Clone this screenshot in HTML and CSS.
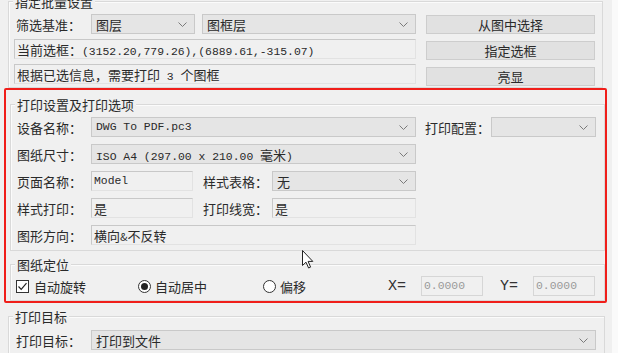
FILE: index.html
```html
<!DOCTYPE html>
<html lang="zh-CN">
<head>
    <meta charset="UTF-8">
    <meta name="viewport" content="width=device-width, initial-scale=1.0">
    <title>批量打印</title>
    <link rel="stylesheet" href="styles.css">
</head>
<body>
    <div class="dialog">
        <div class="group batch">
            <div class="group-title">指定批量设置</div>
            <div class="batch-body">
                <div class="batch-left">
                    <div class="row">
                        <span class="label label-wide">筛选基准：</span>
                        <div class="select w-104">图层<svg class="chev" viewBox="0 0 9 5"><path d="M0.5 0.5 L4.5 4.5 L8.5 0.5"/></svg></div>
                        <div class="select w-214 ml-7">图框层<svg class="chev" viewBox="0 0 9 5"><path d="M0.5 0.5 L4.5 4.5 L8.5 0.5"/></svg></div>
                    </div>
                    <div class="row gap-5">
                        <div class="field w-402"><span>当前选框：<span class="num">(3152.20,779.26),(6889.61,-315.07)</span></span></div>
                    </div>
                    <div class="row gap-5">
                        <div class="field w-402"><span>根据已选信息，需要打印<span class="num">&nbsp;3&nbsp;</span>个图框</span></div>
                    </div>
                </div>
                <div class="batch-right">
                    <button class="btn">从图中选择</button>
                    <button class="btn">指定选框</button>
                    <button class="btn">亮显</button>
                </div>
            </div>
        </div>

        <div class="group print-opts">
            <div class="group-title">打印设置及打印选项</div>
            <div class="row">
                <span class="label">设备名称：</span>
                <div class="select w-325"><span class="num">DWG To PDF.pc3</span><svg class="chev" viewBox="0 0 9 5"><path d="M0.5 0.5 L4.5 4.5 L8.5 0.5"/></svg></div>
                <span class="label label-cfg">打印配置：</span>
                <div class="select w-105"><span></span><svg class="chev" viewBox="0 0 9 5"><path d="M0.5 0.5 L4.5 4.5 L8.5 0.5"/></svg></div>
            </div>
            <div class="row gap-7">
                <span class="label">图纸尺寸：</span>
                <div class="select w-325"><span><span class="num">ISO A4 (297.00 x 210.00 </span>毫米<span class="num">)</span></span><svg class="chev" viewBox="0 0 9 5"><path d="M0.5 0.5 L4.5 4.5 L8.5 0.5"/></svg></div>
            </div>
            <div class="row gap-7">
                <span class="label">页面名称：</span>
                <div class="field w-102"><span class="num">Model</span></div>
                <span class="label label-mid">样式表格：</span>
                <div class="select w-144">无<svg class="chev" viewBox="0 0 9 5"><path d="M0.5 0.5 L4.5 4.5 L8.5 0.5"/></svg></div>
            </div>
            <div class="row gap-7">
                <span class="label">样式打印：</span>
                <div class="field w-102">是</div>
                <span class="label label-mid">打印线宽：</span>
                <div class="field w-144">是</div>
            </div>
            <div class="row gap-7">
                <span class="label">图形方向：</span>
                <div class="field w-325"><span>横向<span class="amp">&amp;</span>不反转</span></div>
            </div>
        </div>

        <div class="group place">
            <div class="group-title">图纸定位</div>
            <div class="row">
                <div class="opt opt-1">
                    <span class="checkbox"><svg viewBox="0 0 11 11"><path d="M1.5 5.5 L4.2 8.3 L9.5 2.2"/></svg></span>自动旋转
                </div>
                <div class="opt opt-2">
                    <span class="radio checked"></span>自动居中
                </div>
                <div class="opt opt-3">
                    <span class="radio"></span>偏移
                </div>
                <span class="coord">X=</span>
                <div class="field w-62 muted"><span class="num">0.0000</span></div>
                <span class="coord ml-17">Y=</span>
                <div class="field w-62 muted"><span class="num">0.0000</span></div>
            </div>
        </div>

        <div class="group target">
            <div class="group-title">打印目标</div>
            <div class="row">
                <span class="label label-target">打印目标：</span>
                <div class="select w-505">打印到文件<svg class="chev" viewBox="0 0 9 5"><path d="M0.5 0.5 L4.5 4.5 L8.5 0.5"/></svg></div>
            </div>
        </div>

        <div class="highlight"></div>

        <svg class="cursor" viewBox="0 0 12 19" width="12" height="19">
            <path d="M0.5 0.5 L0.5 15.5 L4 12.2 L6.6 18 L8.6 17.1 L6.1 11.4 L10.8 11.4 Z"/>
        </svg>
    </div>
</body>
</html>
```

FILE: styles.css
```css
* {
    margin: 0;
    padding: 0;
    box-sizing: border-box;
}

body {
    font-family: "Noto Sans CJK SC", "Noto Sans", sans-serif;
    font-size: 13px;
    color: #2a2a2a;
    background: #fafafa;
}

.dialog {
    position: relative;
    width: 612px;
    height: 353px;
    background: #f0f0f0;
    overflow: hidden;
}

/* group boxes */
.group {
    position: relative;
    border: 1px solid #d9d9d9;
    box-shadow: inset 1px 1px 0 #fbfbfb;
}

.group-title {
    position: absolute;
    top: -9px;
    left: 4px;
    padding: 0 2px;
    line-height: 17px;
    background: #f0f0f0;
}

.batch {
    margin: 1px 0 0 8px;
    width: 595px;
    height: 87px;
    padding: 12px 0 0 5px;
}

.batch-body {
    display: flex;
}

.batch-left {
    width: 402px;
}

.batch-right {
    display: flex;
    flex-direction: column;
    gap: 7px;
    margin-left: 10px;
    padding-top: 1px;
}

.print-opts {
    margin: 16px 0 0 10px;
    width: 595px;
    height: 147px;
    padding: 12px 0 0 6px;
}

.place {
    margin: 13px 0 0 10px;
    width: 595px;
    height: 37px;
    padding: 11px 0 0 5px;
}

.target {
    margin: 15px 0 0 8px;
    width: 597px;
    height: 60px;
    padding: 13px 0 0 7px;
}

/* rows */
.row {
    display: flex;
    align-items: center;
    height: 20px;
}

.gap-5 { margin-top: 5px; }
.gap-7 { margin-top: 7px; }
.ml-7 { margin-left: 7px; }
.ml-17 { margin-left: 17px; }

.label {
    width: 74px;
    white-space: nowrap;
}

.label-wide {
    width: 77px;
    padding-left: 2px;
}

.label-cfg {
    width: 66px;
    margin-left: 9px;
}

.label-mid {
    width: 69px;
    margin-left: 10px;
}

.label-target {
    width: 75px;
}

/* controls */
.select {
    height: 20px;
    display: flex;
    align-items: center;
    justify-content: space-between;
    padding: 0 7px 0 4px;
    border: 1px solid #c9c9c9;
    background: #e5e5e5;
    white-space: nowrap;
}

.chev {
    width: 9px;
    height: 5px;
    fill: none;
    stroke: #7a7a7a;
    stroke-width: 1;
}

.field {
    height: 20px;
    display: flex;
    align-items: center;
    padding-left: 2px;
    border: 1px solid #e2e2e2;
    border-top-color: #c8c8c8;
    border-left-color: #c8c8c8;
    background: #f0f0f0;
    white-space: nowrap;
}

.muted {
    color: #9a9a9a;
    border-color: #d6d6d6;
}

.num {
    font-family: "Liberation Mono", monospace;
    font-size: 11.4px;
}

.amp {
    font-size: 11px;
}

.btn {
    width: 169px;
    height: 19px;
    border: 1px solid #cdcdcd;
    background: #e1e1e1;
    font-family: inherit;
    font-size: 13px;
    color: #2a2a2a;
    line-height: 17px;
}

.w-62 { width: 62px; }
.w-102 { width: 102px; }
.w-104 { width: 104px; }
.w-105 { width: 105px; }
.w-144 { width: 144px; }
.w-214 { width: 214px; }
.w-325 { width: 325px; }
.w-402 { width: 402px; }
.w-505 { width: 505px; }

/* options row */
.opt {
    display: flex;
    align-items: center;
    gap: 5px;
}

.opt-1 { width: 122px; }
.opt-2 { width: 125px; gap: 4px; }
.opt-3 { width: 125px; gap: 4px; }

.checkbox {
    width: 13px;
    height: 13px;
    border: 1px solid #333;
    background: #fff;
    display: flex;
}

.checkbox svg {
    width: 11px;
    height: 11px;
    fill: none;
    stroke: #222;
    stroke-width: 1.2;
}

.radio {
    width: 13px;
    height: 13px;
    border: 1px solid #333;
    border-radius: 50%;
    background: #fff;
    display: flex;
    align-items: center;
    justify-content: center;
}

.radio.checked::after {
    content: "";
    width: 7px;
    height: 7px;
    border-radius: 50%;
    background: #222;
}

.coord {
    width: 33px;
    font-family: "Liberation Mono", monospace;
    font-size: 15px;
    color: #333;
}

/* annotation overlays */
.highlight {
    position: absolute;
    left: 4px;
    top: 88px;
    width: 603px;
    height: 215px;
    border: 2px solid #f01e1a;
    border-radius: 2px;
    pointer-events: none;
}

.cursor {
    position: absolute;
    left: 302px;
    top: 250px;
    fill: #fff;
    stroke: #222;
    stroke-width: 1;
}
```
